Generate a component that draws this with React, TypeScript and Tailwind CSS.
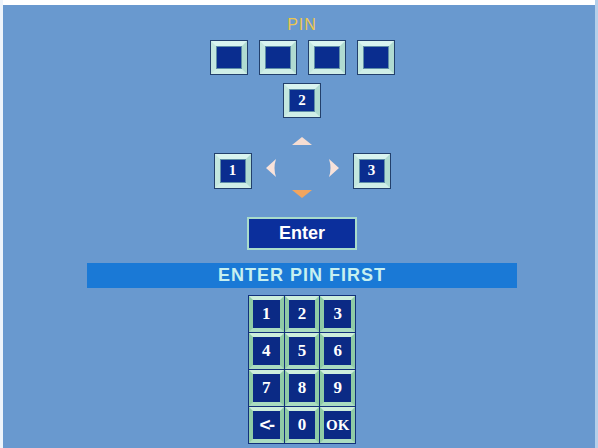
import React from "react";

const Bevel: React.FC<{ className: string; children?: React.ReactNode }> = ({ className, children }) => (
  <div className={`border border-[#23406c] ${className}`}>
    <div className="h-full w-full border-[5px] border-t-[#d9f4f0] border-l-[#c3e7df] border-r-[#b0dbd1] border-b-[#cfeee7]">
      <div className="h-full w-full border border-[#5f8fa8] bg-[#0a2d8f] flex items-center justify-center text-white font-bold text-[15px] [font-family:'Liberation_Serif',serif]">
        {children}
      </div>
    </div>
  </div>
);

const keys = ["1", "2", "3", "4", "5", "6", "7", "8", "9", "<-", "0", "OK"];

export default function App() {
  return (
    <div className="w-[598px] h-[448px] overflow-hidden flex bg-white">
      <div className="w-[3px] bg-[#eef4fb]" />
      <div className="flex-1 flex flex-col">
        <div className="h-[5px] bg-white" />
        <div className="flex-1 bg-[#6999cf] flex flex-col items-center pl-[6px]">
          <div className="mt-[12px] h-[16px] leading-[16px] text-[16px] tracking-[1px] text-[#ecc64e] [font-family:'Liberation_Sans',sans-serif]">
            PIN
          </div>

          <div className="mt-[7px] flex gap-[11px]">
            {[0, 1, 2, 3].map((i) => (
              <Bevel key={i} className="w-[38px] h-[35px]" />
            ))}
          </div>

          <Bevel className="mt-[8px] w-[38px] h-[35px]">2</Bevel>

          <div className="mt-[19px] flex items-center">
            <Bevel className="w-[38px] h-[36px] mt-[6px]">1</Bevel>
            <div className="w-[101px] h-[61px] flex flex-col items-center justify-between">
              <svg width="20" height="8" viewBox="0 0 20 8">
                <path d="M10 0 L20 8 L0 8 Z" fill="#f6ddd2" />
              </svg>
              <div className="w-full flex justify-between px-[14px]">
                <svg width="10" height="18" viewBox="0 0 10 18">
                  <path d="M0 9 L10 0 Q7 9 10 18 Z" fill="#f8e2da" />
                </svg>
                <svg width="10" height="18" viewBox="0 0 10 18">
                  <path d="M10 9 L0 0 Q3 9 0 18 Z" fill="#f8e2da" />
                </svg>
              </div>
              <svg width="20" height="8" viewBox="0 0 20 8">
                <path d="M0 0 L20 0 L10 8 Z" fill="#f2a55e" />
              </svg>
            </div>
            <Bevel className="w-[38px] h-[36px] mt-[6px]">3</Bevel>
          </div>

          <div className="mt-[19px] w-[110px] h-[33px] border-[2px] border-[#a9dccb] bg-[#0b2f9c] flex items-center justify-center text-white font-bold text-[18px] [font-family:'Liberation_Sans',sans-serif]">
            Enter
          </div>

          <div className="mt-[13px] w-[430px] h-[25px] bg-[#1a79d6] flex items-center justify-center text-[#c6f0f0] font-bold text-[18px] tracking-[1px] [font-family:'Liberation_Sans',sans-serif]">
            ENTER PIN FIRST
          </div>

          <div className="mt-[7px] w-[108px] grid grid-cols-3 gap-px bg-[#12307a] p-px">
            {keys.map((k) => (
              <div
                key={k}
                className={`h-[36px] border-[4px] border-t-[#cdeedb] border-b-[#aadcc0] border-l-[#8fcba6] border-r-[#8fcba6] bg-[#0b2a85] flex items-center justify-center text-white font-bold ${
                  k === "<-"
                    ? "text-[19px] tracking-[-2px] [font-family:'Liberation_Sans',sans-serif]"
                    : k === "OK"
                      ? "text-[15px] [font-family:'Liberation_Serif',serif]"
                      : "text-[17px] [font-family:'Liberation_Serif',serif]"
                }`}
              >
                {k}
              </div>
            ))}
          </div>
        </div>
      </div>
      <div className="w-[3px] bg-[#b4cfea]" />
    </div>
  );
}
